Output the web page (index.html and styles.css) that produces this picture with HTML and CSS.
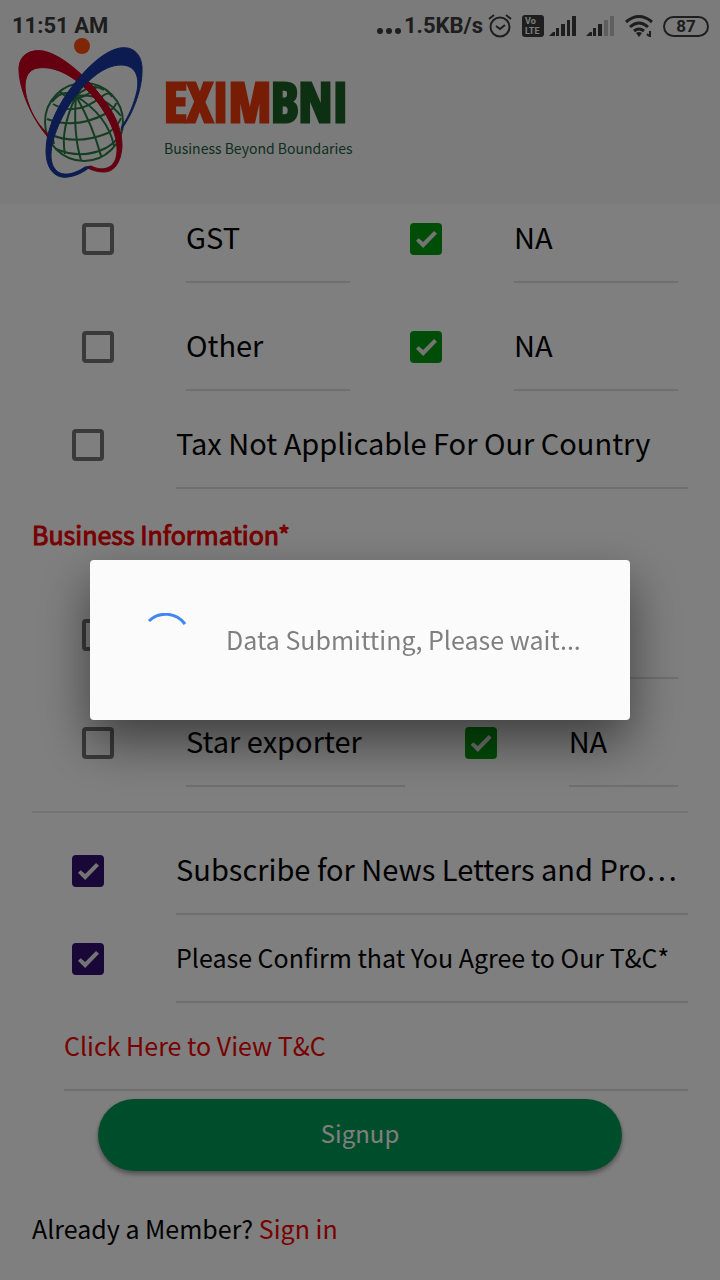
FILE: index.html
```html
<!DOCTYPE html>
<html lang="en">
<head>
<meta charset="utf-8">
<meta name="viewport" content="width=device-width, initial-scale=1">
<title>EXIMBNI Signup</title>
<link rel="stylesheet" href="styles.css">
</head>
<body>
<div class="app">
  <header class="header">
    <div class="status">
      <span class="status-time">11:51 AM</span>
      <div class="status-icons">
        <svg class="dots" width="24" height="24" viewBox="0 0 24 24" fill="currentColor"><circle cx="3" cy="17" r="3"/><circle cx="12" cy="17" r="3"/><circle cx="21" cy="17" r="3"/></svg>
        <span class="speed">1.5KB/s</span>
        <svg class="alarm" width="24" height="26" viewBox="0 0 24 26" fill="none" stroke="currentColor" stroke-width="2"><circle cx="12" cy="14" r="9.5"/><path d="M8 13l4 3 5-4M1 6l5-4M23 6l-5-4"/></svg>
        <svg class="volte" width="22" height="22" viewBox="0 0 22 22"><rect width="22" height="22" rx="3" fill="currentColor"/><text x="3" y="9" class="volte-text">Vo</text><text x="3" y="19" class="volte-text">LTE</text></svg>
        <svg class="signal" width="28" height="22" viewBox="0 0 28 22" fill="currentColor"><path d="M0 21l4-4h2v4zM7 13h3v8H7zM12 9h4v12h-4zM18 5h3v16h-3zM23 1h4v20h-4z"/></svg>
        <svg class="signal" width="28" height="22" viewBox="0 0 28 22" fill="currentColor"><path d="M0 21l4-4h2v4zM7 13h3v8H7zM12 9h4v12h-4z"/><path opacity=".3" d="M18 5h4v16h-4zM24 1h4v20h-4z"/></svg>
        <svg class="wifi" width="28" height="24" viewBox="0 0 28 24" fill="none" stroke="currentColor" stroke-width="3"><path d="M1 8Q14-3 27 8M5 13Q14 5 23 13M9 17Q14 13 19 17"/><path d="M14 23l-3-4q3-2 6 0z" fill="currentColor" stroke="none"/><path d="M25 17v6M22 20l2 2" stroke-width="2"/></svg>
        <span class="battery">87</span>
      </div>
    </div>
    <div class="brand">
      <svg class="brand-mark" width="126" height="142" viewBox="18 37 126 142" fill="none">
        <g stroke="#2a7a42" stroke-width="2">
          <circle cx="84" cy="122" r="39"/>
          <path d="M76 96Q46 118 54 144M76 96Q60 130 65 154M76 96Q73 134 81 160M76 96Q93 126 101 156M76 96Q108 116 114 146M76 96Q102 92 121 116M76 96Q92 82 104 90M76 96Q62 88 52 102M76 96Q82 86 80 84"/>
          <path d="M60 92Q76 106 96 88M53 104Q76 118 104 95Q110 91 112 97M47 119Q76 130 107 113Q116 107 116 103M49 134Q76 146 108 133Q118 126 121 118M56 149Q82 160 106 148Q116 142 120 135"/>
        </g>
        <path fill="#c9001e" stroke="#c9001e" d="M48 137C31 118 18 86 19 67C20 55 30 49 43 51C60 54 82 73 97 91C114 111 122 128 122 146C121 163 114 172 104 172C97 172 91 170 86 167L91 166C103 172 113 168 116 158C121 140 108 112 88 91C70 73 53 66 38 68C24 70 22 87 29 105C33 117 40 126 47 133Z"/>
        <path fill="#1838a0" stroke="#1838a0" d="M121 130C134 112 143 87 142 67C141 53 132 46 120 48C103 51 84 70 68 92C54 112 46 133 46 151C46 170 56 179 68 177C76 176 84 172 90 167L85 167C73 175 61 177 55 169C46 158 53 132 68 107C84 82 103 65 121 65C135 65 140 76 137 91C134 104 129 116 122 126Z"/>
        <circle cx="82" cy="46" r="8" fill="#fe4c10"/>
      </svg>
      <div class="brand-copy">
        <div class="brand-name"><span class="brand-exim">EXIM</span><span class="brand-bni">BNI</span></div>
        <div class="brand-tag">Business Beyond Boundaries</div>
      </div>
    </div>
  </header>

  <main class="form">
    <div class="pair">
      <label class="item"><input class="box" type="checkbox"><span class="label">GST</span></label>
      <label class="item"><input class="box green" type="checkbox" checked><span class="label">NA</span></label>
    </div>
    <div class="pair">
      <label class="item"><input class="box" type="checkbox"><span class="label">Other</span></label>
      <label class="item"><input class="box green" type="checkbox" checked><span class="label">NA</span></label>
    </div>
    <label class="item"><input class="box" type="checkbox"><span class="label">Tax Not Applicable For Our Country</span></label>

    <h2 class="section-title">Business Information*</h2>

    <div class="pair wide-first">
      <label class="item"><input class="box" type="checkbox"><span class="label"></span></label>
      <label class="item"><input class="box green" type="checkbox" checked><span class="label"></span></label>
    </div>
    <div class="pair wide-first">
      <label class="item"><input class="box" type="checkbox"><span class="label">Star exporter</span></label>
      <label class="item"><input class="box green" type="checkbox" checked><span class="label">NA</span></label>
    </div>
    <hr class="divider">

    <label class="item"><input class="box purple" type="checkbox" checked><span class="label">Subscribe for News Letters and Pro…</span></label>
    <label class="item"><input class="box purple" type="checkbox" checked><span class="label small">Please Confirm that You Agree to Our T&amp;C*</span></label>
    <a class="terms" href="#terms">Click Here to View T&amp;C</a>
    <button class="signup" type="button">Signup</button>
    <p class="member">Already a Member? <a href="#signin">Sign in</a></p>
  </main>
</div>

<div class="backdrop">
  <div class="dialog" role="alertdialog" aria-labelledby="wait">
    <svg class="spinner" width="52" height="52" viewBox="0 0 52 52" fill="none" stroke="#4285f4" stroke-width="3"><path d="M9 8A24 24 0 0 1 45 11"/></svg>
    <span id="wait">Data Submitting, Please wait...</span>
  </div>
</div>
</body>
</html>
```

FILE: styles.css
```css
* { box-sizing: border-box; }

body {
  margin: 0;
  background: #fff;
  color: #000;
  font-family: "Noto Sans CJK SC", "Noto Sans", sans-serif;
  font-size: 25px;
}

.app {
  min-height: 100vh;
  overflow: hidden;
}

/* Header */
.header {
  position: relative;
  z-index: 1;
  height: 204px;
  background: #f7f7f7;
}

.status {
  display: flex;
  justify-content: space-between;
  height: 37px;
  padding: 12px 11px 0 12px;
  color: #3c3c3c;
  font: 700 22px/28px Roboto, sans-serif;
}

.status-icons {
  display: flex;
  align-items: center;
  height: 28px;
}

.speed { margin: 0 5px 0 3px; }
.alarm { margin-right: 10px; }
.volte { margin-right: 5px; }
.signal { margin-right: 9px; }
.wifi { margin: 0 10px 0 2px; }

.volte-text {
  fill: #f7f7f7;
  font: 700 9px Roboto, sans-serif;
}

.battery {
  width: 46px;
  height: 21px;
  border: 2px solid;
  border-radius: 11px;
  font-size: 17px;
  line-height: 17px;
  text-align: center;
}

.brand {
  display: flex;
  gap: 20px;
  padding-left: 18px;
}

.brand-copy { padding-top: 34px; }

.brand-name {
  font: 700 54px/60px Impact, "Open Sans Condensed", "Liberation Sans Narrow", sans-serif;
  -webkit-text-stroke: 3px;
}

.brand-exim { color: #ee3a0c; }
.brand-bni { color: #1c6024; }

.brand-tag {
  margin-top: 7px;
  color: #1c6040;
  font: 14px/20px "Noto Sans CJK SC", "Noto Sans", sans-serif;
}

/* Form */
.form {
  display: flex;
  flex-direction: column;
  margin-top: -19px;
  padding: 0 32px;
}

.pair {
  display: grid;
  grid-template-columns: 1fr 1fr;
}

.pair.wide-first { grid-template-columns: 7fr 5fr; }
.pair .item { margin: 10px; }

.item {
  display: flex;
  align-items: center;
  gap: 72px;
  min-width: 0;
  height: 88px;
  padding-left: 40px;
}

.label {
  flex: 1;
  min-width: 0;
  height: 88px;
  border-bottom: 2px solid #dedede;
  font-size: 29px;
  line-height: 82px;
  white-space: nowrap;
}

.label.small {
  font-size: 25px;
  line-height: 84px;
}

.box {
  appearance: none;
  flex: none;
  width: 32px;
  height: 32px;
  margin: 0;
  border: 4px solid #757575;
  border-radius: 4px;
}

.box:checked {
  display: grid;
  place-items: center;
  padding: 1px 0 0 1px;
  border: 0;
}

.box:checked::after {
  content: "";
  width: 21px;
  height: 17px;
  background: #e8e8e8;
  clip-path: polygon(0 58%, 13% 42%, 34% 64%, 86% 0, 100% 16%, 34% 100%);
}

.green { background: #009a10; }
.purple { background: #33106e; }

.section-title {
  margin: 0;
  height: 92px;
  color: #f00000;
  font-size: 25px;
  font-weight: 400;
  line-height: 90px;
  -webkit-text-stroke: 1px #f00000;
}

.divider {
  width: 100%;
  height: 2px;
  margin: 14px 0;
  border: 0;
  background: #e6e6e6;
}

.terms {
  height: 88px;
  margin-left: 32px;
  border-bottom: 2px solid #dedede;
  color: #f00000;
  line-height: 84px;
  text-decoration: none;
}

.signup {
  height: 72px;
  margin: 8px 66px 0;
  padding: 0 0 4px;
  border: 0;
  border-radius: 36px;
  background: #009a58;
  box-shadow: 0 3px 5px rgba(0, 0, 0, .4);
  color: #fff;
  font: 24px/68px "Noto Sans CJK SC", "Noto Sans", sans-serif;
}

.member {
  margin: 38px 0 0;
  line-height: 38px;
}

.member a {
  color: #f00000;
  text-decoration: none;
}

/* Progress dialog */
.backdrop {
  position: fixed;
  inset: 0;
  z-index: 2;
  display: flex;
  align-items: center;
  justify-content: center;
  background: rgba(0, 0, 0, .5);
}

.dialog {
  display: flex;
  align-items: center;
  gap: 34px;
  width: 75%;
  height: 160px;
  padding: 0 0 2px 50px;
  border-radius: 4px;
  background: #fbfbfb;
  box-shadow: 0 22px 50px rgba(0, 0, 0, .5);
  color: #808080;
  white-space: nowrap;
}
```
